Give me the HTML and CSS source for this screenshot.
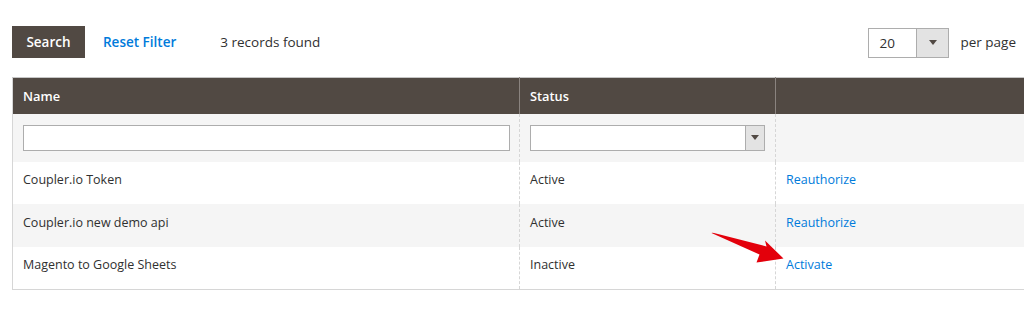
FILE: index.html
```html
<!DOCTYPE html>
<html>
<head>
<meta charset="utf-8">
<link rel="stylesheet" href="styles.css">
</head>
<body>
<div class="page">
  <div class="toolbar">
    <button class="btn-search">Search</button>
    <a class="reset" href="#">Reset Filter</a>
    <span class="count">3 records found</span>
    <div class="spacer"></div>
    <div class="limiter">
      <span class="limiter-val">20</span>
      <span class="limiter-btn"><span class="tri"></span></span>
    </div>
    <span class="perpage">per page</span>
  </div>
  <div class="grid-wrap">
    <table class="grid">
      <colgroup>
        <col class="c1"><col class="c2"><col class="c3">
      </colgroup>
      <thead>
        <tr class="head">
          <th>Name</th>
          <th>Status</th>
          <th></th>
        </tr>
        <tr class="filters">
          <td><div class="inp"></div></td>
          <td><div class="sel"><span class="sel-btn"><span class="tri"></span></span></div></td>
          <td></td>
        </tr>
      </thead>
      <tbody>
        <tr>
          <td>Coupler.io Token</td>
          <td>Active</td>
          <td><a href="#">Reauthorize</a></td>
        </tr>
        <tr class="alt">
          <td>Coupler.io new demo api</td>
          <td>Active</td>
          <td><a href="#">Reauthorize</a></td>
        </tr>
        <tr>
          <td>Magento to Google Sheets</td>
          <td>Inactive</td>
          <td><a href="#">Activate</a></td>
        </tr>
      </tbody>
    </table>
    <svg class="arrow" width="85" height="42" viewBox="0 0 85 42">
      <path d="M6.5 5 Q7 4.5 9 5 L61.5 18.5 L60 12.5 L78.5 30.5 L51.5 34.5 L54.5 26.5 Z" fill="#e3000b"/>
    </svg>
  </div>
</div>
</body>
</html>
```
FILE: styles.css
```css
html, body {
  margin: 0;
  padding: 0;
  background: #fff;
  overflow: hidden;
}
body {
  font-family: "Open Sans", "Liberation Sans", sans-serif;
  color: #303030;
  font-size: 12.5px;
  width: 1024px;
  height: 322px;
}
.page {
  padding: 26px 0 0 12px;
}
.toolbar {
  display: flex;
  align-items: center;
  height: 32px;
  width: 1004px;
}
.btn-search {
  background: #514943;
  color: #fff;
  border: none;
  font-family: inherit;
  font-size: 13.5px;
  font-weight: 600;
  height: 32px;
  width: 73px;
  padding: 0;
  cursor: pointer;
}
.reset {
  color: #007bdb;
  text-decoration: none;
  font-size: 13.5px;
  font-weight: 600;
  margin-left: 18px;
}
.count {
  font-size: 13.5px;
  margin-left: 44px;
}
.spacer { flex: 1; }
.limiter {
  display: flex;
  width: 81px;
  height: 30px;
  box-sizing: border-box;
  border: 1px solid #adadad;
  margin-top: 1px;
}
.limiter-val {
  flex: 1;
  font-size: 13.5px;
  line-height: 28px;
  padding-left: 10px;
}
.limiter-btn {
  width: 31px;
  background: #e3e3e3;
  border-left: 1px solid #adadad;
  display: flex;
  align-items: center;
  justify-content: center;
}
.tri {
  width: 0;
  height: 0;
  border-left: 4px solid transparent;
  border-right: 4px solid transparent;
  border-top: 5px solid #514943;
}
.perpage {
  font-size: 13.5px;
  margin-left: 11px;
}
.grid-wrap {
  position: relative;
  margin-top: 19px;
}
.grid {
  border-collapse: collapse;
  width: 1030px;
  border-left: 1px solid #d6d6d6;
  border-top: 1px solid #c6c6c6;
  border-bottom: 1px solid #d6d6d6;
}
.c1 { width: 507px; }
.c2 { width: 256px; }
.head th {
  background: #514943;
  color: #fff;
  font-weight: 600;
  text-align: left;
  height: 36px;
  padding: 0 10px;
  box-sizing: border-box;
  border-left: 1px solid #8a837f;
  font-size: 12.8px;
}
.head th:first-child { border-left: none; }
.filters td {
  background: #f5f5f5;
  height: 48px;
  padding: 0 10px;
  box-sizing: border-box;
}
.grid td {
  border-left: 1px dashed #d6d6d6;
}
.grid td:first-child { border-left: none; }
.inp {
  height: 24px;
  border: 1px solid #adadad;
  background: #fff;
  margin-right: -1px;
}
.sel {
  height: 24px;
  border: 1px solid #adadad;
  background: #fff;
  display: flex;
  justify-content: flex-end;
}
.sel-btn {
  width: 18px;
  background: #e3e3e3;
  border-left: 1px solid #adadad;
  display: flex;
  align-items: center;
  justify-content: center;
}
tbody td {
  height: 42px;
  padding: 0 10px 6px;
  box-sizing: border-box;
  font-size: 12.5px;
}
tbody tr:nth-child(2) td, tbody tr:nth-child(3) td { height: 43px; }
tbody tr.alt td { background: #f5f5f5; }
tbody a {
  color: #007bdb;
  text-decoration: none;
}
.arrow {
  position: absolute;
  left: 693px;
  top: 151px;
}
```
